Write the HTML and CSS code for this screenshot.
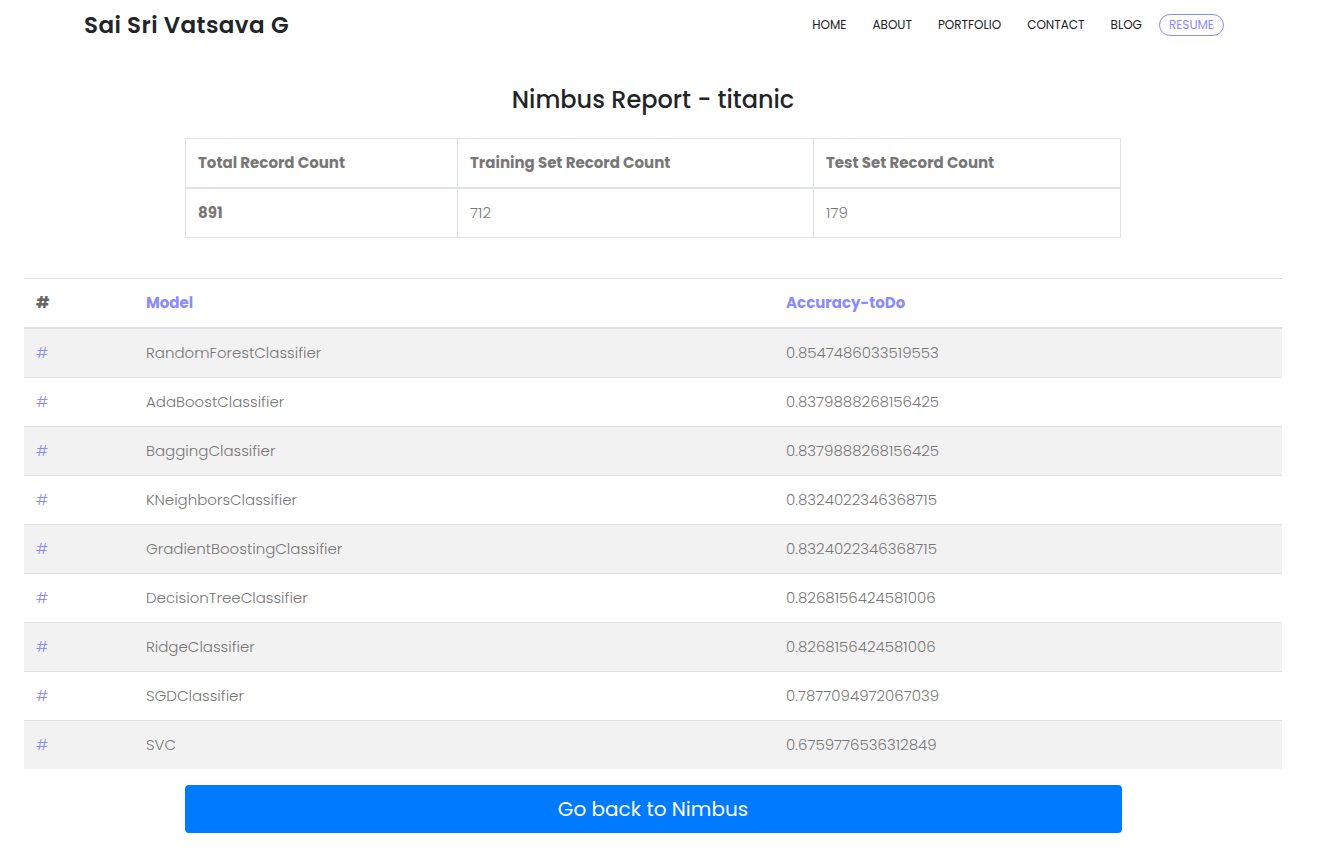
FILE: index.html
```html
<!DOCTYPE html>
<html lang="en">
<head>
<meta charset="utf-8">
<title>Nimbus Report - titanic</title>
<link rel="stylesheet" href="styles.css">
</head>
<body>
<div class="page">
  <header class="topbar">
    <a class="brand" href="#">Sai Sri Vatsava G</a>
    <nav class="nav">
      <a href="#">HOME</a>
      <a href="#">ABOUT</a>
      <a href="#">PORTFOLIO</a>
      <a href="#">CONTACT</a>
      <a href="#">BLOG</a>
      <a class="pill" href="#">RESUME</a>
    </nav>
  </header>

  <h1 class="title">Nimbus Report - titanic</h1>

  <table class="tbl summary">
    <thead>
      <tr><th class="c1">Total Record Count</th><th class="c2">Training Set Record Count</th><th>Test Set Record Count</th></tr>
    </thead>
    <tbody>
      <tr><td class="strong">891</td><td>712</td><td>179</td></tr>
    </tbody>
  </table>

  <table class="tbl models">
    <thead>
      <tr><th class="m1">#</th><th class="m2 accent">Model</th><th class="accent">Accuracy-toDo</th></tr>
    </thead>
    <tbody>
      <tr><td class="accent">#</td><td>RandomForestClassifier</td><td>0.8547486033519553</td></tr>
      <tr><td class="accent">#</td><td>AdaBoostClassifier</td><td>0.8379888268156425</td></tr>
      <tr><td class="accent">#</td><td>BaggingClassifier</td><td>0.8379888268156425</td></tr>
      <tr><td class="accent">#</td><td>KNeighborsClassifier</td><td>0.8324022346368715</td></tr>
      <tr><td class="accent">#</td><td>GradientBoostingClassifier</td><td>0.8324022346368715</td></tr>
      <tr><td class="accent">#</td><td>DecisionTreeClassifier</td><td>0.8268156424581006</td></tr>
      <tr><td class="accent">#</td><td>RidgeClassifier</td><td>0.8268156424581006</td></tr>
      <tr><td class="accent">#</td><td>SGDClassifier</td><td>0.7877094972067039</td></tr>
      <tr><td class="accent">#</td><td>SVC</td><td>0.6759776536312849</td></tr>
    </tbody>
  </table>

  <a class="back" href="#">Go back to Nimbus</a>
</div>
</body>
</html>
```

FILE: styles.css
```css
* { box-sizing: border-box; }
html, body { margin: 0; padding: 0; background: #fff; }
body {
  font-family: "Poppins", "Open Sans", "DejaVu Sans", sans-serif;
  color: #777;
  font-size: 15px;
  line-height: 24px;
}
a { text-decoration: none; }

.page {
  width: 1258px;
  margin-left: 24px;
  display: flex;
  flex-direction: column;
  align-items: center;
}

.topbar {
  width: 1142px;
  height: 48px;
  padding-top: 1px;
  display: flex;
  align-items: center;
  justify-content: space-between;
}
.brand {
  font-size: 23px;
  font-weight: 600;
  color: #212529;
  letter-spacing: 0.4px;
  margin-left: 2px;
}
.nav {
  display: flex;
  align-items: center;
  gap: 26px;
}
.nav a {
  font-size: 12px;
  color: #222;
  line-height: 20px;
}
.nav a.pill {
  color: #8b8bfb;
  border: 1px solid #8b8bfb;
  border-radius: 12px;
  padding: 0 9px;
  margin-left: -9px;
}

.title {
  margin: 36px 0 22px;
  font-size: 24px;
  font-weight: 500;
  line-height: 32px;
  color: #212529;
}

.tbl {
  border-collapse: collapse;
}
.tbl th, .tbl td {
  padding: 12px 12px;
  text-align: left;
  vertical-align: top;
}
.tbl th { font-weight: 700; color: #777; }

.summary {
  width: 936px;
  border: 1px solid #dee2e6;
}
.summary th, .summary td { border: 1px solid #dee2e6; }
.summary thead th { border-bottom-width: 2px; }
.summary .c1 { width: 272px; }
.summary .c2 { width: 356px; }
.summary td { font-weight: 300; }
.summary td.strong { font-weight: 700; }

.models {
  width: 1258px;
  margin-top: 40px;
}
.models th, .models td { border-top: 1px solid #dee2e6; }
.models thead th { border-bottom: 2px solid #dee2e6; color: #666; }
.models thead th.accent { color: #8b8bfb; }
.models .m1 { width: 110px; }
.models .m2 { width: 640px; }
.models td { font-weight: 300; }
.models td.accent { color: #8b8bfb; }
.models tbody tr:nth-child(odd) { background: #f2f2f2; }

.back {
  margin-top: 16px;
  width: 937px;
  height: 48px;
  display: flex;
  align-items: center;
  justify-content: center;
  background: #007bff;
  color: #fff;
  border-radius: 4px;
  font-size: 20px;
}
```
